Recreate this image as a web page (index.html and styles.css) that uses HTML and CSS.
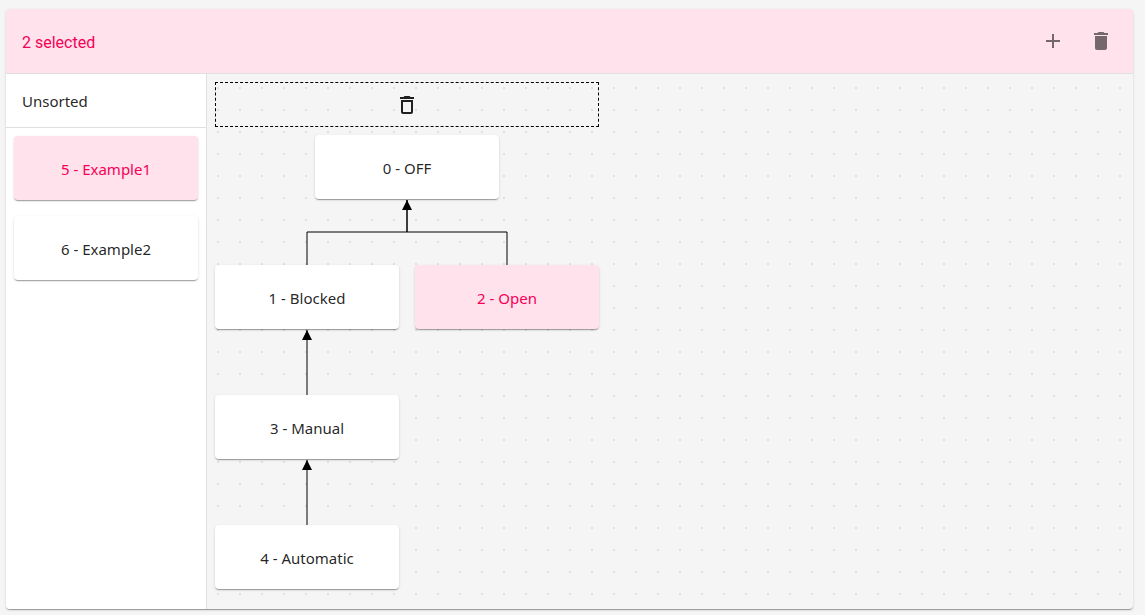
FILE: index.html
```
<!DOCTYPE html>
<html lang="en">
<head>
<meta charset="utf-8">
<title>State hierarchy</title>
<link rel="stylesheet" href="styles.css">
</head>
<body>
<main class="panel">
  <header class="toolbar">
    <h1 class="toolbar-title">2 selected</h1>
    <div class="toolbar-actions">
      <button class="icon-button" type="button" aria-label="Add">
        <svg class="icon" viewBox="0 0 24 24"><path d="M19 13h-6v6h-2v-6H5v-2h6V5h2v6h6z"/></svg>
      </button>
      <button class="icon-button" type="button" aria-label="Delete">
        <svg class="icon" viewBox="0 0 24 24"><path d="M6 19c0 1.100.9 2 2 2h8c1.100 0 2-.9 2-2V7H6zM19 4h-3.500l-1-1h-5l-1 1H5v2h14z"/></svg>
      </button>
    </div>
  </header>
  <div class="content">
    <aside class="sidebar">
      <h2 class="sidebar-title">Unsorted</h2>
      <div class="sidebar-list">
        <button class="node selected" type="button">5 - Example1</button>
        <button class="node" type="button">6 - Example2</button>
      </div>
    </aside>
    <section class="canvas" aria-label="Tree">
      <div class="drop-zone">
        <svg class="icon" viewBox="0 0 24 24"><path d="M16 9v10H8V9h8m-1.500-6h-5l-1 1H5v2h14V4h-3.500zM18 7H6v12c0 1.100.9 2 2 2h8c1.100 0 2-.9 2-2z"/></svg>
      </div>
      <div class="tree">
        <svg class="edges" width="400" height="470" viewBox="0 0 400 470">
          <path class="edge" d="M100 138V97M100 97H200M200 97V65"/>
          <path class="edge" d="M300 138V97M300 97H200M200 97V65"/>
          <path class="edge" d="M100 268V195M100 398V325"/>
          <path d="M200 65l5 10h-10zM100 195l5 10h-10zM100 325l5 10h-10z"/>
        </svg>
        <button class="node node-off" type="button">0 - OFF</button>
        <button class="node node-blocked" type="button">1 - Blocked</button>
        <button class="node node-open selected" type="button">2 - Open</button>
        <button class="node node-manual" type="button">3 - Manual</button>
        <button class="node node-automatic" type="button">4 - Automatic</button>
      </div>
    </section>
  </div>
</main>
</body>
</html>
```
FILE: styles.css
```
* {
  box-sizing: border-box;
}

body {
  display: flex;
  min-height: 100vh;
  margin: 0;
  padding: 9px 12px 6px 6px;
  background: #f5f5f5;
  color: rgba(0, 0, 0, 0.87);
  font: 400 15px/24px "Noto Sans", "Open Sans", sans-serif;
}

.panel {
  display: flex;
  flex: 1;
  flex-direction: column;
  border-radius: 4px;
  box-shadow: 0 2px 1px -1px rgba(0, 0, 0, 0.2), 0 1px 1px rgba(0, 0, 0, 0.14), 0 1px 3px rgba(0, 0, 0, 0.12);
}

.toolbar {
  display: flex;
  align-items: center;
  justify-content: space-between;
  padding: 8px 8px 8px 16px;
  border-bottom: 1px solid #e0e0e0;
  border-radius: 4px 4px 0 0;
  background: #ffe2eb;
}

.toolbar-title {
  margin: 0;
  padding-top: 3px;
  color: #f50057;
  font: 400 16px/24px Roboto, sans-serif;
}

.toolbar-actions {
  display: flex;
}

.icon-button {
  display: grid;
  place-items: center;
  width: 48px;
  height: 48px;
  padding: 0;
  border: 0;
  background: none;
  color: rgba(0, 0, 0, 0.54);
}

.icon {
  display: block;
  width: 24px;
  height: 24px;
  fill: currentColor;
}

.content {
  display: flex;
  flex: 1;
}

.sidebar {
  flex: 0 0 201px;
  border-right: 1px solid #e0e0e0;
  border-radius: 0 0 0 4px;
  background: #fff;
}

.sidebar-title {
  margin: 0;
  padding: 15px 16px 14px;
  border-bottom: 1px solid #e0e0e0;
  font-size: 15px;
  font-weight: 400;
}

.sidebar-list {
  display: grid;
  gap: 16px;
  padding: 8px;
}

.node {
  height: 64px;
  padding: 2px 8px 0;
  border: 0;
  border-radius: 4px;
  background: #fff;
  box-shadow: 0 2px 1px -1px rgba(0, 0, 0, 0.2), 0 1px 1px rgba(0, 0, 0, 0.14), 0 1px 3px rgba(0, 0, 0, 0.12);
  color: inherit;
  font: inherit;
}

.selected {
  background: #ffe2eb;
  color: #f50057;
}

.canvas {
  flex: 1;
  padding: 8px;
  border-radius: 0 0 4px 0;
  background: conic-gradient(from 90deg at 20px 20px, #e0e0e0 25%, transparent 0) 12px 15px / 22px 22px;
}

.drop-zone {
  display: grid;
  place-items: center;
  width: 384px;
  height: 45px;
  border: 1px dashed #000;
}

.tree {
  position: relative;
  width: 384px;
  height: 462px;
  margin-top: 8px;
}

.edges {
  position: absolute;
  top: 0;
  left: -8px;
}

.edge {
  fill: none;
  stroke: #000;
}

.tree .node {
  position: absolute;
  width: 184px;
}

.node-off {
  top: 0;
  left: 100px;
}

.node-blocked {
  top: 130px;
  left: 0;
}

.node-open {
  top: 130px;
  left: 200px;
}

.node-manual {
  top: 260px;
  left: 0;
}

.node-automatic {
  top: 390px;
  left: 0;
}
```
